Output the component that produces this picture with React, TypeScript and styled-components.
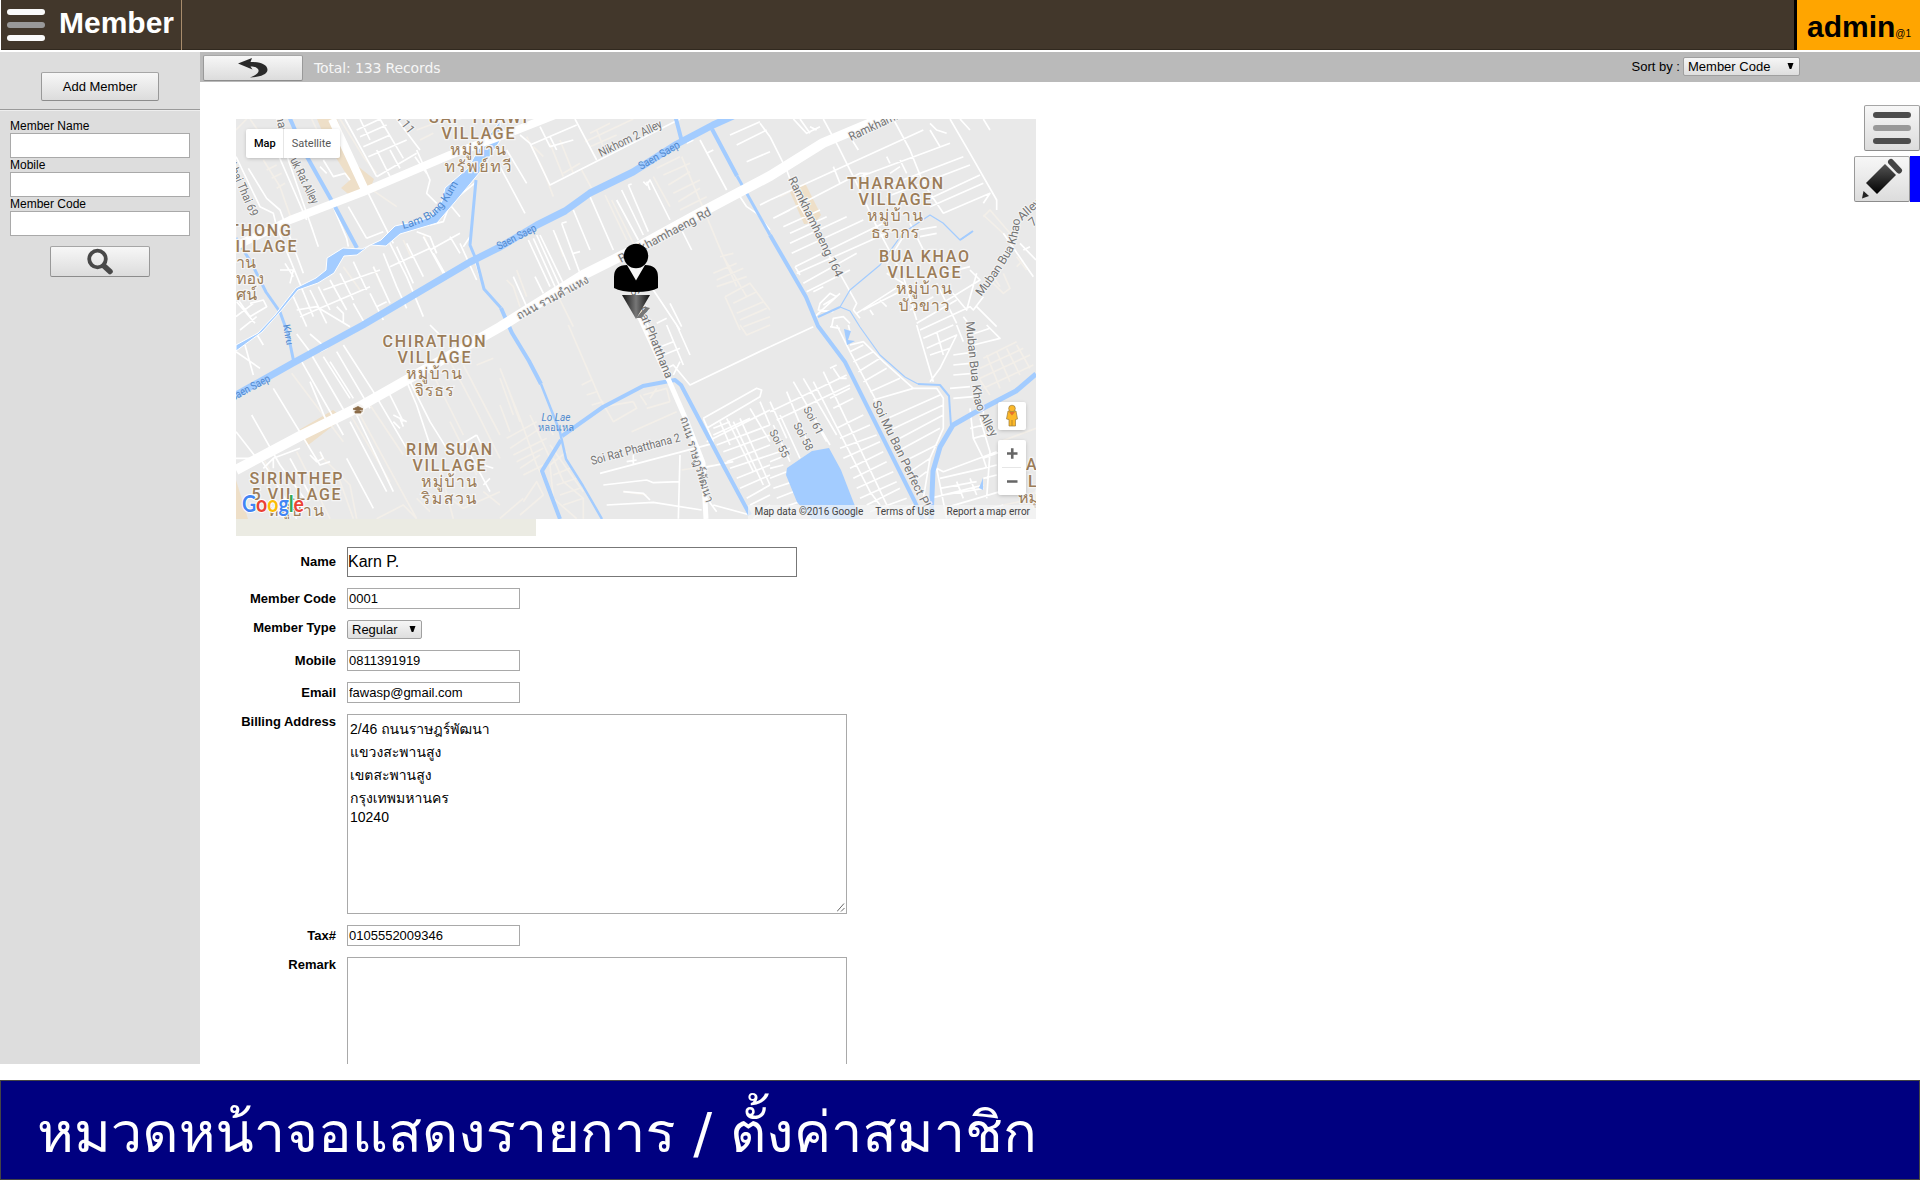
import React from 'react';
import styled, { createGlobalStyle } from 'styled-components';

const GlobalStyle = createGlobalStyle`
  * { box-sizing: border-box; }
  body {
    margin: 0;
    background: #fff;
    color: #000;
    font-family: "Liberation Sans", Arial, Loma, Waree, Garuda, "Noto Sans Thai Looped", "Noto Sans", sans-serif;
    font-size: 13px;
    overflow: hidden;
  }
`;

const Page = styled.div`
  width: 1920px;
  height: 1180px;
  display: flex;
  flex-direction: column;
  overflow: hidden;
`;

const Header = styled.header`
  height: 50px;
  margin-left: 1px;
  display: flex;
  background: #42372b;
  border-bottom: 1px solid #31291f;
  flex: none;
`;

const Brand = styled.div`
  width: 181px;
  height: 50px;
  display: flex;
  padding-left: 6px;
  border-right: 1px solid #a88c6c;
`;

const Title = styled.h1`
  margin: 0 0 0 14px;
  font-size: 30px;
  line-height: 45px;
  font-weight: bold;
  color: #fff;
`;

const User = styled.div`
  margin-left: auto;
  width: 126px;
  height: 50px;
  border-left: 3px solid #000;
  background: #ffa500;
  padding-left: 10px;
  white-space: nowrap;
  line-height: 53px;
  font-size: 30px;
  font-weight: bold;
`;

const UserIndex = styled.span`
  font-size: 10px;
  font-weight: normal;
`;

const Body = styled.div`
  display: flex;
  height: 1012px;
  margin-top: 2px;
  flex: none;
`;

const Sidebar = styled.aside`
  width: 200px;
  background: #ddd;
  display: flex;
  flex-direction: column;
  align-items: center;
  padding-top: 20px;
  flex: none;
`;

const Button = styled.button<{ $w: number; $h: number }>`
  width: ${p => p.$w}px;
  height: ${p => p.$h}px;
  flex: none;
  display: flex;
  align-items: center;
  justify-content: center;
  padding: 0;
  border: 1px solid #999;
  border-color: #a6a6a6 #999 #8c8c8c;
  border-radius: 2px;
  background: linear-gradient(#f7f7f7, #dcdcdc);
  font: 13px "Liberation Sans", Arial, sans-serif;
  color: #000;
`;

const Rule = styled.hr`
  width: 100%;
  height: 2px;
  margin: 8px 0 0;
  border: 0;
  border-top: 1px solid #9a9a9a;
  border-bottom: 1px solid #eee;
`;

const Filters = styled.div`
  width: 180px;
  padding-top: 8px;
  margin-bottom: 10px;
`;

const FilterLabel = styled.label`
  display: block;
  font-size: 12px;
  line-height: 14px;
`;

const FilterInput = styled.input`
  display: block;
  width: 180px;
  height: 25px;
  border: 1px solid #a9a9a9;
  background: #fff;
`;

const Main = styled.main`
  position: relative;
  flex: 1;
  display: flex;
  flex-direction: column;
  overflow: hidden;
`;

const Toolbar = styled.div`
  height: 30px;
  flex: none;
  display: flex;
  align-items: flex-start;
  background: #bababa;
  padding: 3px 120px 0 3px;
`;

const Total = styled.span`
  margin-left: 11px;
  font: 14px/27px "DejaVu Sans", Verdana, sans-serif;
  letter-spacing: -0.13px;
  color: #f6f6f6;
`;

const Sort = styled.div`
  margin-left: auto;
  display: flex;
  gap: 3px;
  line-height: 23px;
  align-items: flex-start;
`;

const Select = styled.div<{ $w: number; $top?: number }>`
  width: ${p => p.$w}px;
  height: 19px;
  margin-top: ${p => p.$top || 0}px;
  padding: 0 5px 0 4px;
  display: flex;
  align-items: center;
  justify-content: space-between;
  border: 1px solid #a0a0a0;
  border-radius: 2px;
  background: linear-gradient(#f6f6f6, #dedede);
  line-height: 17px;
`;

const Content = styled.div`
  padding: 37px 0 0 36px;
`;

const MapBox = styled.div`
  position: relative;
  width: 800px;
  height: 400px;
  overflow: hidden;
  background: #e9e9e9;
  font-family: Roboto, sans-serif;
`;

const MapDrawing = styled.svg`
  display: block;
`;

const MapTypes = styled.div`
  position: absolute;
  left: 10px;
  top: 10px;
  display: flex;
  height: 29px;
  border-radius: 2px;
  background: #fff;
  box-shadow: 0 1px 4px -1px rgba(0, 0, 0, 0.3);
`;

const MapType = styled.span<{ $on?: boolean }>`
  padding: 0 7px 0 8px;
  font-size: 11px;
  line-height: 29px;
  font-weight: ${p => (p.$on ? 500 : 400)};
  color: ${p => (p.$on ? '#000' : '#565656')};
  & + & { border-left: 1px solid #e6e6e6; padding-right: 9px; }
`;

const MapControls = styled.div`
  position: absolute;
  right: 10px;
  top: 283px;
  display: flex;
  flex-direction: column;
  gap: 10px;
`;

const MapControl = styled.div`
  width: 28px;
  border-radius: 2px;
  background: #fff;
  box-shadow: 0 1px 4px -1px rgba(0, 0, 0, 0.3);
  svg { display: block; }
`;

const Attribution = styled.div`
  position: absolute;
  right: 0;
  bottom: 0;
  height: 14px;
  display: flex;
  background: rgba(245, 245, 245, 0.7);
  font-size: 10px;
  line-height: 14px;
  color: #444;
  white-space: nowrap;
  span { padding: 0 6px; }
`;

const Strip = styled.div`
  width: 300px;
  height: 17px;
  background: #ebebe3;
`;

const Form = styled.div`
  display: flex;
  flex-direction: column;
  gap: 11px;
  padding-top: 11px;
`;

const Row = styled.div`
  display: flex;
  align-items: flex-start;
`;

const RowLabel = styled.label<{ $top: number }>`
  width: 100px;
  margin-right: 11px;
  padding-top: ${p => p.$top}px;
  text-align: right;
  font-weight: bold;
  line-height: 15px;
  white-space: nowrap;
`;

const TextField = styled.input<{ $big?: boolean }>`
  width: ${p => (p.$big ? 450 : 173)}px;
  height: ${p => (p.$big ? 30 : 21)}px;
  padding: ${p => (p.$big ? '0 0 1px' : '0 1px')};
  border: 1px solid ${p => (p.$big ? '#777' : '#a9a9a9')};
  font: ${p => (p.$big ? 16 : 13)}px "Liberation Sans", Arial, sans-serif;
  color: #000;
  outline: none;
`;

const TextBox = styled.div`
  width: 500px;
  height: 200px;
  display: flex;
  flex-direction: column;
  padding: 3px 2px 0;
  border: 1px solid #a9a9a9;
  font-size: 14px;
  line-height: 23px;
`;

const Line = styled.div<{ $w?: number; $h?: number }>`
  height: ${p => p.$h || 23}px;
  line-height: ${p => p.$h || 23}px;
  white-space: nowrap;
`;

const Grip = styled.svg`
  margin: auto -1px 1px auto;
  flex: none;
`;

const SideButtons = styled.div`
  position: absolute;
  right: 0;
  top: 53px;
  display: flex;
  flex-direction: column;
  align-items: flex-end;
  gap: 5px;
`;

const Flagged = styled.div`
  display: flex;
  border-right: 10px solid #0000ff;
`;

const Caption = styled.footer`
  height: 100px;
  margin-top: 16px;
  padding-left: 36px;
  flex: none;
  background: #000080;
  border: 1px solid #444;
  color: #fff;
  font: 56px/104px "DejaVu Sans", Waree, Loma, Garuda, "Noto Sans Thai Looped", sans-serif;
  white-space: nowrap;
`;

const Bars = ({ outer, inner }: { outer: string; inner: string }) => (
  <svg width="38" height="50" viewBox="0 0 38 50">
    <rect y="9" width="38" height="6" rx="3" fill={outer} />
    <rect y="22" width="38" height="6" rx="3" fill={inner} />
    <rect y="35" width="38" height="6" rx="3" fill={outer} />
  </svg>
);

const Arrow = () => (
  <svg width="7" height="19" viewBox="0 0 7 19"><path d="M.5 6h6l-2.200 6h-1.600z" fill="#000" /></svg>
);

const BackIcon = () => (
  <svg width="30" height="22" viewBox="0 0 30 22">
    <path d="M0 6.500 14 1 12.500 5C23 5 29.500 8 29.500 13 29 18 21 20 12 20.500 19 18 22 15 20 12 18 10 16 9.500 12.500 9.500L14.500 12.500Z" fill="#2a2a2a" />
  </svg>
);

const SearchIcon = () => (
  <svg width="26" height="27" viewBox="0 0 26 27">
    <circle cx="10.500" cy="11" r="8.300" fill="none" stroke="#484848" strokeWidth="3.800" />
    <path d="M17 18 23 23.500" stroke="#484848" strokeWidth="5.500" strokeLinecap="round" />
  </svg>
);

const PencilIcon = () => (
  <svg width="42" height="42" viewBox="0 0 42 42">
    <defs>
      <linearGradient id="pencil" x1="0" y1="0" x2="0" y2="1">
        <stop offset="0" stopColor="#555" /><stop offset="1" stopColor="#000" />
      </linearGradient>
    </defs>
    <path d="M24 6 35 17 16 36 5 25Z" fill="url(#pencil)" />
    <path d="M2.500 33 8 38 1 40.500Z" fill="#222" />
    <path d="M30 4 38 12.500" stroke="#444" strokeWidth="6" strokeLinecap="round" />
  </svg>
);

type Layer = { c: string; w: number; d: string };
type Tile = { x: number; y: number; layers: Layer[] };

const W = '#fff';
const F = '#f3efe9';

/* Street network, kept in sheets that share one 3:1 scale. */
const streets: Tile[] = [
  { x: 230, y: 110, layers: [
    { c: F, w: 5, d: 'M60 27 110 100M18 60 50 27M50 90 100 60M100 150 150 230 185 330M110 180 140 165M125 205 155 190M140 235 165 220M420 235 500 290M430 470 455 530M580 370 600 420M520 390 545 445M330 27 400 140 440 190M245 27 280 100M560 60 640 30M570 90 610 70M340 470 390 540' },
    { c: W, w: 5, d: 'M18 140 90 290 130 310 140 350 250 620M55 175 110 265 150 300 220 490M140 27 175 150 265 410M130 100 230 330M230 310 250 365M310 290 350 385 355 410M355 290 410 385M415 250 490 400M410 385 460 365M480 400 530 500 580 620M280 150 310 200 345 190 360 210M270 170 290 190M345 27 440 200M380 60 450 27M390 80 470 45M400 110 480 75M415 140 530 90M440 200 560 130M450 27 520 145M390 27 420 90M500 27 570 120M440 120 480 200M480 120 510 175M560 120 600 210 590 250 620 280M555 140 590 190M640 260 690 320M740 215 660 280 640 335 600 345M560 365 600 380 620 430M600 420 690 370M480 470 600 415M610 430 650 500M580 380 640 490M660 380 690 430M690 400 740 510M700 410 720 380M720 400 750 500M530 400 580 500M500 410 550 520M460 430 500 530M430 470 480 580M370 455 410 540M330 490 370 570M300 510 350 600M280 540 450 480M210 620 420 530M200 600 260 590 360 650M150 480 190 480 180 520M165 460 190 500M18 560 60 620 110 590 100 570 60 580M18 620 70 580M30 660 80 620M240 540 290 640M265 530 300 600M320 590 340 610 340 640M370 580 410 650M420 550 460 630M190 560 230 650M440 590 470 575M500 530 530 595M20 575 75 640' },
  ] },
  { x: 500, y: 110, layers: [
    { c: F, w: 5, d: 'M80 80 130 180 160 260M100 110 130 140M245 180 275 235M270 110 350 75M255 95 400 27M270 70 330 40M290 60 310 110M460 200 510 290M545 140 670 440 740 560M470 175 540 140M490 195 570 160M505 225 570 185M520 250 600 210M535 275 600 235M540 300 620 260M315 255 380 390M335 270 400 400M640 490 710 460M650 510 730 475M660 440 700 430M650 530 740 500M670 440 710 530M675 560 750 520 810 600M675 560 720 660M700 580 770 545M710 610 790 575M720 630 800 595M730 650 810 620M20 510 40 530 60 590M50 480 80 560M170 550 220 650M165 370 190 440M150 100 190 200M180 90 220 190M190 190 240 160' },
    { c: W, w: 5, d: 'M0 170 75 310M20 120 80 220M60 75 90 100 150 225 540 27M90 105 230 45M150 80 170 120M225 27 290 150M120 50 150 110 220 90M220 300 270 420M270 260 340 420M350 270 415 390M365 240 430 375M385 225 445 365M385 225 395 222M430 215 440 225 450 210 510 330M440 215 450 240M160 360 210 480M185 340 240 490M185 340 200 335M220 430 240 425M85 390 150 530M100 385 165 530M110 375 180 530M120 375 190 520M105 500 130 550M40 500 80 590M530 330 575 420M600 90 680 240M620 130 640 120M720 260 740 290 770 310 810 360M690 75 780 35M710 105 800 60M740 155 810 125M780 40 810 80M780 285 810 270M460 540 540 660M510 580 545 650M430 620 450 660M470 640 500 625M560 100 580 90' },
  ] },
  { x: 770, y: 110, layers: [
    { c: F, w: 5, d: 'M30 260 60 245M640 320 660 300 720 370M640 315 710 380M670 500 690 530M650 500 700 550 720 535 700 490M740 440 770 480M740 470 760 450' },
    { c: W, w: 5, d: 'M0 80 50 180 90 290 215 500 260 580 250 600M70 27 110 70 150 50M90 27 120 70M120 50 140 60M160 27 205 110 260 220 320 350 400 500 440 630M240 80 265 120M370 27 420 120 460 220 520 310M540 27 600 130 680 270 680 300M570 27 600 60M640 27 660 60M0 270 460 60M190 170 210 220M10 325 270 190 300 190M270 200 540 100M320 240 580 140M350 260 600 165M470 270 630 195M480 290 640 220M520 310 660 250 640 280M480 40 500 60 530 70M480 60 510 110M10 325 60 300M40 350 150 300M60 370 170 320M60 400 230 320M65 430 280 330M75 470 340 340M80 490 350 370M90 495 75 470M100 520 260 430M110 545 240 480M130 545 160 530M160 585 200 560 180 550 150 580 145 600 190 605M135 620 210 550M185 650 190 625 220 620 240 640M260 610 400 520 350 490M270 625 250 600M280 600 400 540M300 600 310 615M330 570 350 590M420 340 480 460M440 360 500 350M450 380 500 370M400 380 350 460M480 500 600 470M500 590 630 510 600 480M540 540 590 600 620 490M500 520 560 640M420 600 490 560M440 640 560 570M450 660 600 590 610 600 640 560M700 370 790 500M750 400 798 450M760 420 780 410M580 620 610 660M620 590 680 650M280 190 300 230M350 140 360 160M390 150 410 190M360 190 390 170' },
  ] },
  { x: 230, y: 325, layers: [
    { c: F, w: 5, d: 'M185 145 340 350M350 250 480 470M390 270 560 581M420 240 520 390M590 110 700 330M650 90 740 260 810 400M700 120 810 330M660 290 740 450M320 440 370 581M200 380 300 581M620 490 700 550 810 500M440 581 520 540 560 581M560 520 600 560M270 390 360 480 380 581M740 120 790 100M760 500 810 540M630 430 670 581M100 400 200 581' },
    { c: W, w: 5, d: 'M18 80 90 130M45 60 70 150M18 320 80 400M65 270 150 420M130 190 270 420 300 410M215 110 340 330M245 90 350 270M280 95 360 220M300 110 370 220M320 80 420 250M340 60 430 200M240 27 290 70 270 80M200 27 240 80M430 200 530 370M470 190 520 290M490 270 530 290M490 290 510 310M510 280 520 305M360 290 470 500M380 270 490 500M540 170 600 290 650 370M270 380 280 400 260 410 240 390M100 430 130 400 210 370M18 400 90 400 130 460 200 581M130 400 130 430M150 420 230 530M180 400 240 510M700 350 780 500M690 360 740 330M740 330 760 370M760 420 790 430M760 480 780 460M350 400 430 550M600 0 630 30M80 27 100 60M530 170 560 240 600 360M240 170 290 290' },
  ] },
  { x: 500, y: 325, layers: [
    { c: F, w: 5, d: 'M205 0 300 220 340 290 410 250 400 230M310 245 400 230M245 180 275 165M260 210 290 200M275 240 310 230M420 210 440 240M430 210 500 190 510 230M450 220 470 190M440 250 510 230M395 320 530 260M0 130 60 280 110 420 140 480M20 340 110 290M30 370 120 310M40 390 140 340M50 410 130 370M60 430 120 390M70 450 130 420M90 270 150 400M130 270 160 330M160 400 190 470 250 520 250 581M200 380 150 420 160 520 230 581M160 450 210 430M170 480 230 460M180 510 240 490M190 540 250 520M60 570 130 510 110 470 70 530M0 580 70 520M370 500 440 510M0 240 30 320M0 160 40 270M545 435 640 420M720 0 740 30 810 0M20 180 60 290M150 360 250 500' },
    { c: W, w: 5, d: 'M300 445 640 355M310 480 440 465 460 473 540 470M370 500 430 505 450 525M320 540 460 532 605 555M540 390 535 581M400 390 400 420M380 410 410 405M500 130 520 120 570 180 810 65M470 70 520 50M490 90 540 70M500 0 550 120M530 0 570 90M610 280 770 190 785 195 780 215 620 310M610 280 640 350M640 310 690 290M640 330 750 280M620 350 810 255M650 360 810 300M670 380 810 330M680 410 810 360M690 430 810 390M710 460 810 420M720 490 810 450M740 520 810 480M750 540 810 510M660 290 690 360M680 280 760 440M700 290 790 480M720 280 810 480M750 250 810 350M780 230 810 300M640 540 750 570M600 430 700 410M760 581 810 540M620 520 650 560M540 110 520 150' },
  ] },
  { x: 770, y: 325, layers: [
    { c: F, w: 5, d: 'M640 100 740 50M630 130 760 70M630 160 780 90M640 190 790 120M650 90 690 190M680 80 720 170M710 70 750 150M740 60 780 130M620 150 660 210M690 350 798 310M720 440 760 520 798 500M700 540 798 520' },
    { c: W, w: 5, d: 'M0 65 130 5M200 0 240 80 320 230M210 10 180 5M235 0 240 20M240 60 280 50 340 110 430 190 500 190 520 220 520 310 480 400 460 520M240 80 280 60M250 110 310 80M265 140 330 100M280 170 350 130M300 200 390 160M310 225 430 190M330 290 510 210M350 320 520 240M370 350 520 270M380 380 510 310M400 410 500 360M420 440 480 400M430 470 470 440M130 170 300 500 330 540M70 170 180 360M100 160 200 330M0 260 230 150M20 285 240 180M190 130 210 160 230 160M160 140 370 581M180 130 200 120M10 300 60 410M30 270 90 400M50 200 120 370M0 230 50 340M130 280 170 350M0 390 60 370M0 410 50 390M0 430 40 420M0 460 50 440M10 490 70 470M20 520 70 500M30 550 90 530M190 250 250 220M180 220 240 190M200 310 280 270M210 340 300 300M210 370 320 330M220 400 330 350M240 430 340 380M250 460 350 410M260 490 370 440M270 520 380 470M290 540 390 490M300 560 410 520M320 581 430 540M440 0 490 170M460 40 550 0M470 70 560 30 510 130 480 170M480 90 540 70M500 20 520 90M560 0 580 50M550 90 620 80M550 120 600 115M550 150 610 145M540 190 600 185M550 220 610 215M610 60 690 40 650 0M600 30 660 10M600 250 610 340 640 400 650 430M600 310 640 300 640 250M610 340 680 320M630 280 660 380 650 520M500 430 520 440 680 380M500 430 530 581M510 460 640 430M510 490 620 470M480 520 640 480M520 510 640 490M520 550 690 500M540 581 700 540M640 430 680 420M600 460 620 510M560 470 580 520M640 400 720 370M640 460 680 450' },
  ] },
];

const water = [
  { w: 7, d: 'M236 395 293 363 363 325 470 262 500 247 537 225 565 211 590 193 633 172 677 144 713 125 733 116' },
  { w: 4, d: 'M288 114 306 155 333 203 357 248M675 115 682 142M712 129 737 176' },
  { w: 3, d: 'M737 176 770 235' },
  { w: 3, d: 'M236 238 252 264 266 292 280 312 288 334 294 363M476 180 470 245 477 262 484 289 501 308' },
  { w: 4, d: 'M501 308 512 333 529 361 541 384' },
  { w: 2.500, d: 'M541 384 560 432 566 459 583 486 602 519' },
  { w: 4, d: 'M561 440 542 471 560 519' },
  { w: 4, d: 'M562 436 603 407 643 386 675 380 681 385 700 421 722 463 750 515M770 235 806 297 818 326 845 362 880 432 915 502 924 522' },
  { w: 1.200, d: 'M972 232 960 240 943 223 930 215 903 233 880 265 850 290 840 307 850 311 860 327 880 355 905 377 918 384' },
  { w: 2, d: 'M818 317 840 307M918 384 940 385 949 396 951 426M973 231 960 240' },
  { w: 5, d: 'M1036 374 1016 391 974 413 953 425 940 447 933 471 931 519' },
];

type LabelProps = { x: number; y: number; t: string; len?: number; r?: number; s?: number; c?: string; anchor?: 'start' | 'middle' };
const StreetLabel = ({ x, y, t, len, r = 0, s = 12, c = '#737373', anchor = 'start' }: LabelProps) => (
  <text x={x} y={y} fontSize={s} fill={c} textAnchor={anchor} transform={`rotate(${r} ${x} ${y})`}
    textLength={len} lengthAdjust="spacingAndGlyphs" stroke="#f3f3f3" strokeWidth="2" paintOrder="stroke">{t}</text>
);

const places: { x: number; y: number; lines: [string, number][] }[] = [
  { x: 478, y: 123, lines: [['SAP THAWI', 98], ['VILLAGE', 73], ['หมู่บ้าน', 56], ['ทรัพย์ทวี', 67]] },
  { x: 895, y: 189, lines: [['THARAKON', 96], ['VILLAGE', 73], ['หมู่บ้าน', 56], ['ธรากร', 48]] },
  { x: 924, y: 262, lines: [['BUA KHAO', 90], ['VILLAGE', 73], ['หมู่บ้าน', 56], ['บัวขาว', 51]] },
  { x: 434, y: 347, lines: [['CHIRATHON', 103], ['VILLAGE', 73], ['หมู่บ้าน', 56], ['จิรธร', 39]] },
  { x: 449, y: 455, lines: [['RIM SUAN', 86], ['VILLAGE', 73], ['หมู่บ้าน', 56], ['ริมสวน', 55]] },
  { x: 296, y: 484, lines: [['SIRINTHEP', 93], ['5 VILLAGE', 89], ['หมู่บ้าน', 56], ['สิรินเทพ', 64]] },
  { x: 260, y: 236, lines: [['THONG', 62], ['VILLAGE', 73]] },
];

const Place = ({ x, y, lines }: (typeof places)[number]) => (
  <g fontSize="16" fontWeight="500" fill="#9b7c58" stroke="#f5f5f5" strokeWidth="2.500" textAnchor="middle">
    {lines.map(([t, len], i) => (
      <text key={i} x={x} y={y + i * 16.200} textLength={len} paintOrder="stroke"
        fontWeight={i > 1 ? 400 : 500}>{t}</text>
    ))}
  </g>
);

const CityMap = () => (
  <MapDrawing width="800" height="400" viewBox="236 119 800 400" fontFamily='Roboto, Loma, Waree, Garuda, "Noto Sans Thai Looped", "DejaVu Sans", sans-serif'>
    <defs>
      <path id="buaKhao" d="M981 297 Q1004 268 1013 250 Q1019 236 1020 219" />
      <path id="buaKhaoSouth" d="M966 322 Q969 360 974 400 Q980 420 993 440" />
      <path id="lamBung" d="M403 229 Q430 222 440 211 Q448 202 458 184" />
      <linearGradient id="pin" x1="0" x2="1">
        <stop offset="0" stopColor="#111" /><stop offset=".5" stopColor="#777" /><stop offset="1" stopColor="#111" />
      </linearGradient>
    </defs>
    <path d="M317 119h20l18 45 19 15-4 10-17 9-12-10 9-8-22-35ZM790 192l15-9 16 32-6 8-11 1ZM299 430l34-20 10 8-36 28ZM236 480l12 39h-12Z" fill="#eedfc8" />
    {streets.map((tile, i) => (
      <g key={i} transform={`translate(${tile.x} ${tile.y}) scale(.33333)`} fill="none" strokeLinejoin="round">
        {tile.layers.map((l, j) => <path key={j} d={l.d} stroke={l.c} strokeWidth={l.w} />)}
      </g>
    ))}
    <g fill="none" stroke="#a3ccff" strokeLinejoin="round">
      {water.map((w, i) => <path key={i} d={w.d} strokeWidth={w.w} />)}
    </g>
    <g fill="#a3ccff" stroke="#fff" strokeWidth="1">
      <path d="M236 345 258 333 275 315 296 288 316 278 326 270 327 258 343 248 362 249 381 240 395 226 417 221 431 217 442 201 445 188 468 168 478 150 500 121 500 141 480 172 455 202 437 223 400 234 386 246 370 245 357 255 344 256 334 273 318 283 298 290 280 312 262 332 236 351Z" />
    </g>
    <path d="M787 468 812 451 829 448 841 470 860 519H812L797 502 786 475ZM844 329 851 331 848 340 855 341 847 345ZM983 478 983 490 979 488Z" fill="#a3ccff" />
    <g fill="none" stroke="#fff" strokeLinejoin="round">
      <path d="M236 246 290 220 363 192 450 155 517 130 555 115M332 119 366 192" strokeWidth="8" />
      <path d="M236 470 300 436 357 408 410 378 500 327 583 275 627 253 700 213 770 176 823 143 890 115" strokeWidth="10" />
      <path d="M660 360 687 422 703 463 706 519" strokeWidth="5" />
      <path d="M638 315 668 380" strokeWidth="4" />
    </g>
    {places.map((p, i) => <Place key={i} {...p} />)}
    <g fontSize="16" fill="#9b7c58" stroke="#f5f5f5" strokeWidth="2.500">
      <text x="236" y="268" paintOrder="stroke">าน</text>
      <text x="236" y="284" paintOrder="stroke" textLength="28">ทอง</text>
      <text x="236" y="300" paintOrder="stroke">ศน์</text>
      <text x="1026" y="470" fontWeight="500" paintOrder="stroke">A</text>
      <text x="1028" y="487" fontWeight="500" paintOrder="stroke">L</text>
      <text x="1018" y="503" paintOrder="stroke">หมู่</text>
    </g>
    <StreetLabel x={276} y={116} t="has" r={78} />
    <StreetLabel x={290} y={160} t="uk Rat Alley" r={64} len={50} s={12} />
    <StreetLabel x={228} y={165} t="khai Thai 69" r={66} len={57} s={12} />
    <StreetLabel x={393} y={114} t="oi 11" r={52} />
    <StreetLabel x={601} y={157} t="Nikhom 2 Alley" r={-26} len={69} />
    <StreetLabel x={621} y={263} t="Ramkhamhaeng Rd" r={-28} len={103} />
    <StreetLabel x={851} y={141} t="Ramkhamhaeng" r={-25} len={80} />
    <StreetLabel x={788} y={179} t="Ramkhamhaeng 164" r={64} len={110} />
    <StreetLabel x={519} y={320} t="ถนน รามคำแหง" r={-28} len={80} />
    <StreetLabel x={630} y={290} t="Soi Rat Phatthana" r={68} len={96} />
    <StreetLabel x={592} y={465} t="Soi Rat Phatthana 2" r={-15} len={92} />
    <StreetLabel x={680} y={418} t="ถนน ราษฎร์พัฒนา" r={73} len={89} />
    <StreetLabel x={872} y={403} t="Soi Mu Ban Perfect Pl" r={64} len={117} />
    <StreetLabel x={769} y={432} t="Soi 55" r={62} len={30} s={11} />
    <StreetLabel x={793} y={425} t="Soi 58" r={62} len={30} s={11} />
    <StreetLabel x={803} y={409} t="Soi 61" r={62} len={30} s={11} />
    <StreetLabel x={1022} y={221} t="Alley" r={-42} />
    <StreetLabel x={1033} y={227} t="7" r={-42} />
    <g fontSize="12" fill="#737373" stroke="#f3f3f3" strokeWidth="2">
      <text paintOrder="stroke"><textPath href="#buaKhao" textLength="89">Muban Bua Khao</textPath></text>
      <text paintOrder="stroke"><textPath href="#buaKhaoSouth" textLength="120">Muban Bua Khao Alley</textPath></text>
    </g>
    <g fill="#5089cf" fontSize="11">
      <text><textPath href="#lamBung">Lam Bung Kum</textPath></text>
      <text transform="translate(641 170) rotate(-30)" textLength="46" lengthAdjust="spacingAndGlyphs">Saen Saep</text>
      <text transform="translate(499 250) rotate(-27)" textLength="43" lengthAdjust="spacingAndGlyphs">Saen Saep</text>
      <text transform="translate(233 401) rotate(-28)" textLength="43" lengthAdjust="spacingAndGlyphs">Saen Saep</text>
      <text transform="translate(283 325) rotate(80)" fontSize="10">Khru</text>
      <g fontSize="10" textAnchor="middle">
        <text x="556" y="421" fontStyle="italic" textLength="29" lengthAdjust="spacingAndGlyphs">Lo Lae</text>
        <text x="556" y="431" textLength="36" lengthAdjust="spacingAndGlyphs">หลอแหล</text>
      </g>
    </g>
    <circle cx="358.500" cy="410" r="6" fill="#f7f5f2" />
    <path d="m353 409 5-2.500 5 2.500-5 2ZM355 411v2h6v-2M362 409v3" fill="#8a6b47" stroke="#8a6b47" strokeWidth=".8" />
    <text x="242" y="512" fontSize="23" fontFamily="Lato, sans-serif" fontWeight="700" textLength="62" lengthAdjust="spacingAndGlyphs" stroke="#fff" strokeWidth="2" paintOrder="stroke">
      <tspan fill="#4285f4">G</tspan><tspan fill="#ea4335">o</tspan><tspan fill="#fbbc05">o</tspan><tspan fill="#4285f4">g</tspan><tspan fill="#34a853">l</tspan><tspan fill="#ea4335">e</tspan>
    </text>
    <path d="m636 318 10-11 4 1-9 10Z" fill="#777" />
    <path d="M622 295h28l-14 24Z" fill="url(#pin)" />
    <path d="M628 267h16l-8 13Z" fill="#f6f6f6" />
    <circle cx="636" cy="256" r="12.200" />
    <path d="M614 288v-11q0-12 13-12l9 15.500 9-15.500q13 0 13 12v11q-7 4-22 4t-22-4Z" />
  </MapDrawing>
);

const filters = ['Member Name', 'Mobile', 'Member Code'];
const address: [string, number?][] = [
  ['2/46 ถนนราษฎร์พัฒนา'], ['แขวงสะพานสูง'], ['เขตสะพานสูง'], ['กรุงเทพมหานคร'], ['10240', 15],
];

const GripMark = () => (
  <Grip width="8" height="9" viewBox="0 0 8 9"><path d="M0 8.500 7 .5M4 8.500 7.500 5" stroke="#555" strokeWidth=".9" /></Grip>
);

const Field = ({ label, value, big }: { label: string; value: string; big?: boolean }) => (
  <Row>
    <RowLabel $top={big ? 7 : 3}>{label}</RowLabel>
    <TextField $big={big} defaultValue={value} />
  </Row>
);

export default function App() {
  return (
    <Page>
      <GlobalStyle />
      <Header>
        <Brand>
          <Bars outer="#fafafa" inner="#999" />
          <Title>Member</Title>
        </Brand>
        <User>admin<UserIndex>@1</UserIndex></User>
      </Header>
      <Body>
        <Sidebar>
          <Button $w={118} $h={29}>Add Member</Button>
          <Rule />
          <Filters>
            {filters.map(f => (
              <React.Fragment key={f}>
                <FilterLabel>{f}</FilterLabel>
                <FilterInput />
              </React.Fragment>
            ))}
          </Filters>
          <Button $w={100} $h={31}><SearchIcon /></Button>
        </Sidebar>
        <Main>
          <Toolbar>
            <Button $w={100} $h={26}><BackIcon /></Button>
            <Total>Total: 133 Records</Total>
            <Sort>
              Sort by :
              <Select $w={117} $top={2}>Member Code<Arrow /></Select>
            </Sort>
          </Toolbar>
          <Content>
            <MapBox>
              <CityMap />
              <MapTypes>
                <MapType $on>Map</MapType>
                <MapType>Satellite</MapType>
              </MapTypes>
              <MapControls>
                <MapControl>
                  <svg width="28" height="28" viewBox="0 0 28 28">
                    <path d="M10 9h8l1.500 8-2 .5V24h-6.500v-6.500L8.500 17Z" fill="#fbb829" stroke="#9a7b3f" strokeWidth=".7" />
                    <circle cx="14" cy="6.500" r="3.300" fill="#fbb829" stroke="#9a7b3f" strokeWidth=".7" />
                    <path d="m11 10 3 3.500 3-3.500Z" fill="#e6702e" />
                    <path d="M14 18v6" stroke="#b98828" />
                  </svg>
                </MapControl>
                <MapControl>
                  <svg width="28" height="55" viewBox="0 0 28 55">
                    <path d="M9 13.500h10.500M14.250 8.300v10.500M9 41.500h10.500" stroke="#666" strokeWidth="2.600" />
                    <path d="M4 27.500h19" stroke="#e6e6e6" />
                  </svg>
                </MapControl>
              </MapControls>
              <Attribution>
                <span>Map data ©2016 Google</span>
                <span>Terms of Use</span>
                <span>Report a map error</span>
              </Attribution>
            </MapBox>
            <Strip />
            <Form>
              <Field label="Name" value="Karn P." big />
              <Field label="Member Code" value="0001" />
              <Row>
                <RowLabel $top={0}>Member Type</RowLabel>
                <Select $w={75}>Regular<Arrow /></Select>
              </Row>
              <Field label="Mobile" value="0811391919" />
              <Field label="Email" value="fawasp@gmail.com" />
              <Row>
                <RowLabel $top={0}>Billing Address</RowLabel>
                <TextBox>
                  {address.map(([t, h]) => <Line key={t} $h={h}>{t}</Line>)}
                  <GripMark />
                </TextBox>
              </Row>
              <Field label="Tax#" value="0105552009346" />
              <Row>
                <RowLabel $top={0}>Remark</RowLabel>
                <TextBox />
              </Row>
            </Form>
          </Content>
          <SideButtons>
            <Button $w={56} $h={46}><Bars outer="#4d4d4d" inner="#999" /></Button>
            <Flagged>
              <Button $w={56} $h={46}><PencilIcon /></Button>
            </Flagged>
          </SideButtons>
        </Main>
      </Body>
      <Caption>หมวดหน้าจอแสดงรายการ / ตั้งค่าสมาชิก</Caption>
    </Page>
  );
}
